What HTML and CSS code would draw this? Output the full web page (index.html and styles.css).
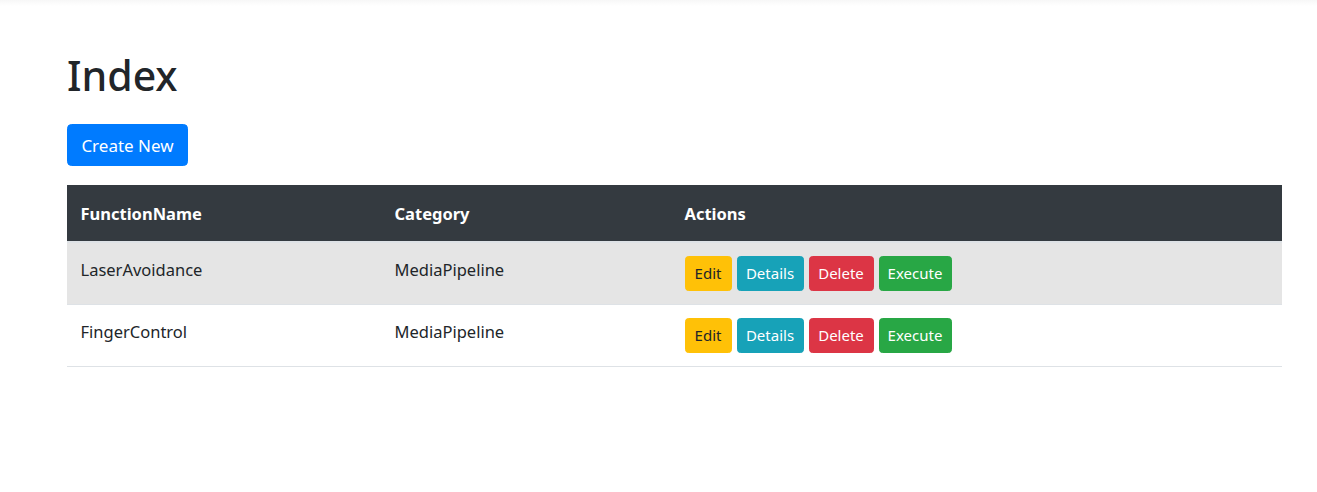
FILE: index.html
```html
<!DOCTYPE html>
<html lang="en">
<head>
<meta charset="utf-8">
<title>Index</title>
<link rel="stylesheet" href="styles.css">
</head>
<body>
<div class="topbar"></div>
<main class="container">
  <h1 class="title">Index</h1>
  <p class="actions-top"><a class="btn btn-primary" href="#">Create New</a></p>
  <table class="table">
    <thead>
      <tr>
        <th class="col-name">FunctionName</th>
        <th class="col-cat">Category</th>
        <th class="col-act">Actions</th>
      </tr>
    </thead>
    <tbody>
      <tr class="hovered">
        <td>LaserAvoidance</td>
        <td>MediaPipeline</td>
        <td>
          <div class="btn-row">
            <a class="btn btn-sm btn-warning w-edit" href="#">Edit</a>
            <a class="btn btn-sm btn-info w-details" href="#">Details</a>
            <a class="btn btn-sm btn-danger w-delete" href="#">Delete</a>
            <a class="btn btn-sm btn-success w-exec" href="#">Execute</a>
          </div>
        </td>
      </tr>
      <tr>
        <td>FingerControl</td>
        <td>MediaPipeline</td>
        <td>
          <div class="btn-row">
            <a class="btn btn-sm btn-warning w-edit" href="#">Edit</a>
            <a class="btn btn-sm btn-info w-details" href="#">Details</a>
            <a class="btn btn-sm btn-danger w-delete" href="#">Delete</a>
            <a class="btn btn-sm btn-success w-exec" href="#">Execute</a>
          </div>
        </td>
      </tr>
    </tbody>
  </table>
</main>
</body>
</html>
```
FILE: styles.css
```css
* { box-sizing: border-box; }
html, body { margin: 0; padding: 0; }
body {
  font-family: "Noto Sans", "Open Sans", sans-serif;
  font-size: 16.5px;
  line-height: 27px;
  color: #212529;
  background: #fff;
}
.topbar {
  height: 6px;
  background: linear-gradient(#f7f7f7, #ffffff);
}
.container {
  width: 1215px;
  margin-left: 67px;
  padding-top: 42px;
}
.title {
  margin: 0 0 22px 0;
  font-size: 41px;
  font-weight: 500;
  line-height: 54px;
}
.actions-top {
  margin: 0 0 19px 0;
}
.btn {
  display: inline-flex;
  align-items: center;
  justify-content: center;
  text-decoration: none;
  border: 1px solid transparent;
  color: #fff;
  white-space: nowrap;
}
.btn-primary {
  background: #007bff;
  border-color: #007bff;
  height: 42px;
  width: 121px;
  border-radius: 4.5px;
  font-size: 17px;
}
.table {
  width: 1215px;
  border-collapse: collapse;
}
.table th {
  text-align: left;
  background: #343a40;
  color: #fff;
  font-weight: 700;
  height: 57px;
  padding: 0 13.5px;
  vertical-align: middle;
  border-bottom: 2px solid #dee2e6;
}
.col-name { width: 314px; }
.col-cat { width: 290px; }
.table td {
  padding: 13px 13.5px;
  vertical-align: top;
  border-top: 1px solid #dee2e6;
  height: 62px;
}
.table tbody tr:first-child td { border-top: 0; }
.table tbody tr:last-child td { border-bottom: 1px solid #dee2e6; }
.table tr.hovered td { background: #e5e5e5; }
.btn-row {
  display: flex;
  gap: 5px;
}
.btn-sm {
  height: 35px;
  border-radius: 3.6px;
  font-size: 15px;
}
.btn-warning { background: #ffc107; border-color: #ffc107; color: #212529; }
.btn-info { background: #17a2b8; border-color: #17a2b8; }
.btn-danger { background: #dc3545; border-color: #dc3545; }
.btn-success { background: #28a745; border-color: #28a745; }
.w-edit { width: 47px; }
.w-details { width: 67px; }
.w-delete { width: 65px; }
.w-exec { width: 73px; }
```
